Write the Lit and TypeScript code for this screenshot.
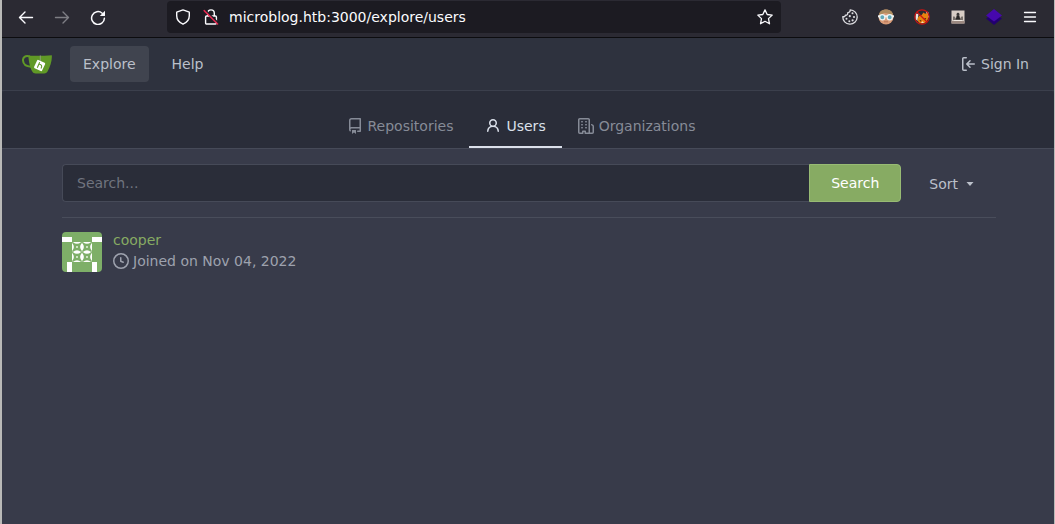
import { LitElement, html, css, svg } from "lit";
import { customElement, property } from "lit/decorators.js";

const octicon = (paths: string[]) => html`
  <svg class="icon" viewBox="0 0 16 16" width="16" height="16" fill="currentColor" aria-hidden="true">
    ${paths.map((d) => svg`<path fill-rule="evenodd" d=${d}></path>`)}
  </svg>`;

const icons = {
  repo: ["M2 2.5A2.5 2.5 0 0 1 4.5 0h8.75a.75.75 0 0 1 .75.75v12.5a.75.75 0 0 1-.75.75h-2.5a.75.75 0 1 1 0-1.5h1.75v-2h-8a1 1 0 0 0-.714 1.7.75.75 0 0 1-1.072 1.05A2.495 2.495 0 0 1 2 11.5v-9zm10.5-1V9h-8c-.356 0-.694.074-1 .208V2.5a1 1 0 0 1 1-1h8zM5 12.25v3.25a.25.25 0 0 0 .4.2l1.45-1.087a.25.25 0 0 1 .3 0L8.6 15.7a.25.25 0 0 0 .4-.2v-3.25a.25.25 0 0 0-.25-.25h-3.5a.25.25 0 0 0-.25.25z"],
  person: ["M10.5 5a2.5 2.5 0 1 1-5 0 2.5 2.5 0 0 1 5 0zm.061 3.073a4 4 0 1 0-5.123 0 6.004 6.004 0 0 0-3.431 5.142.75.75 0 0 0 1.498.07 4.5 4.5 0 0 1 8.99 0 .75.75 0 1 0 1.498-.07 6.005 6.005 0 0 0-3.432-5.142z"],
  organization: ["M1.5 14.25c0 .138.112.25.25.25H4v-1.25a.75.75 0 0 1 .75-.75h2.5a.75.75 0 0 1 .75.75v1.25h2.25a.25.25 0 0 0 .25-.25V1.75a.25.25 0 0 0-.25-.25h-8.5a.25.25 0 0 0-.25.25v12.5zM1.75 16A1.75 1.75 0 0 1 0 14.25V1.75C0 .784.784 0 1.75 0h8.5C11.216 0 12 .784 12 1.75v12.5c0 .085-.006.168-.018.25h2.268a.25.25 0 0 0 .25-.25V8.285a.25.25 0 0 0-.111-.208l-1.055-.703a.75.75 0 1 1 .832-1.248l1.055.703c.487.325.779.871.779 1.456v5.965A1.75 1.75 0 0 1 14.25 16h-3.5a.75.75 0 0 1-.197-.026c-.099.017-.2.026-.303.026h-3a.75.75 0 0 1-.75-.75V14h-1v1.25a.75.75 0 0 1-.75.75h-3zM3 3.75A.75.75 0 0 1 3.75 3h.5a.75.75 0 0 1 0 1.5h-.5A.75.75 0 0 1 3 3.75zM3.75 6a.75.75 0 0 0 0 1.5h.5a.75.75 0 0 0 0-1.5h-.5zM3 9.75A.75.75 0 0 1 3.75 9h.5a.75.75 0 0 1 0 1.5h-.5A.75.75 0 0 1 3 9.75zM7.75 9a.75.75 0 0 0 0 1.5h.5a.75.75 0 0 0 0-1.5h-.5zM7 6.75A.75.75 0 0 1 7.75 6h.5a.75.75 0 0 1 0 1.5h-.5A.75.75 0 0 1 7 6.75zM7.75 3a.75.75 0 0 0 0 1.5h.5a.75.75 0 0 0 0-1.5h-.5z"],
  signIn: ["M2 2.75C2 1.784 2.784 1 3.75 1h2.5a.75.75 0 0 1 0 1.5h-2.5a.25.25 0 0 0-.25.25v10.5c0 .138.112.25.25.25h2.5a.75.75 0 0 1 0 1.5h-2.5A1.75 1.75 0 0 1 2 13.25V2.75zm6.56 4.5h5.69a.75.75 0 0 1 0 1.5H8.56l1.97 1.97a.75.75 0 1 1-1.06 1.06L6.22 8.53a.75.75 0 0 1 0-1.06l3.25-3.25a.75.75 0 1 1 1.06 1.06L8.56 7.25z"],
  clock: ["M1.5 8a6.5 6.5 0 1 1 13 0 6.5 6.5 0 0 1-13 0zM8 0a8 8 0 1 0 0 16A8 8 0 0 0 8 0zm.5 4.75a.75.75 0 0 0-1.5 0v3.5a.75.75 0 0 0 .471.696l2.5 1a.75.75 0 0 0 .557-1.392L8.5 7.742V4.75z"],
};

@customElement("browser-toolbar")
export class BrowserToolbar extends LitElement {
  @property() url = "";

  static styles = css`
    :host {
      display: flex;
      align-items: center;
      padding: 1px 16px 4px;
      background: #2b2a33;
      border-bottom: 1px solid #0c0c0f;
      color: #fbfbfe;
    }
    .group { display: flex; align-items: center; gap: 20px; }
    button {
      display: flex;
      padding: 0;
      border: 0;
      background: none;
      color: inherit;
    }
    button:disabled { opacity: 0.4; }
    .address {
      flex: 1;
      display: flex;
      align-items: center;
      gap: 12px;
      height: 32px;
      margin: 0 61px;
      padding: 0 8px;
      border-radius: 4px;
      background: #1c1b22;
    }
    .address input {
      flex: 1;
      min-width: 0;
      padding: 0;
      margin-left: -2px;
      border: 0;
      outline: 0;
      background: none;
      color: inherit;
      font: 14px/20px "DejaVu Sans", sans-serif;
    }
  `;

  render() {
    return html`
      <div class="group">
        <button aria-label="Back">
          <svg width="16" height="16" viewBox="0 0 16 16" fill="none" stroke="currentColor" stroke-width="1.4" stroke-linecap="round" stroke-linejoin="round"><path d="M14.5 8.500H1.500M7 3 1.500 8.500 7 14"/></svg>
        </button>
        <button aria-label="Forward" disabled>
          <svg width="16" height="16" viewBox="0 0 16 16" fill="none" stroke="currentColor" stroke-width="1.4" stroke-linecap="round" stroke-linejoin="round"><path d="M1.500 8.500h13M9 3l5.500 5.500L9 14"/></svg>
        </button>
        <button aria-label="Reload">
          <svg width="16" height="16" viewBox="0 0 16 16"><path d="M14.4 9.200A6.400 6.400 0 1 1 12.200 4.200" fill="none" stroke="currentColor" stroke-width="1.5" stroke-linecap="round"/><path d="M15 1.800v4.600a.6.6 0 0 1-.6.6H9.800z" fill="currentColor"/></svg>
        </button>
      </div>
      <div class="address">
        <svg width="16" height="16" viewBox="0 0 16 16" fill="none" stroke="currentColor" stroke-width="1.4" stroke-linejoin="round"><path d="M8 .9 14.3 3.200v3.600c0 4-2.500 6.800-6.300 8.400C4.200 13.600 1.700 10.800 1.700 6.800V3.200z"/></svg>
        <svg width="16" height="16" viewBox="0 0 16 16" fill="none"><path d="M4.700 7V4.200a3.300 3.300 0 0 1 6.600 0V7M3.600 7h8.800a1 1 0 0 1 1 1v6a1 1 0 0 1-1 1H3.600a1 1 0 0 1-1-1V8a1 1 0 0 1 1-1z" stroke="#fbfbfe" stroke-width="1.400"/><path d="M2.400 1 15.800 14.400" stroke="#1c1b22" stroke-width="1.400"/><path d="M1.200 1.600 14.600 15" stroke="#e22850" stroke-width="1.500" stroke-linecap="round"/></svg>
        <input type="text" aria-label="Address" .value=${this.url} />
        <button aria-label="Bookmark this page">
          <svg width="16" height="16" viewBox="0 0 16 16" fill="none" stroke="currentColor" stroke-width="1.3" stroke-linejoin="round"><path d="m8 .9 2.200 4.600 5 .6-3.700 3.500 1 5.200L8 12.300l-4.500 2.500 1-5.200L.8 6.100l5-.6z"/></svg>
        </button>
      </div>
      <div class="group">
        <button aria-label="Cookie editor">
          <svg width="16" height="16" viewBox="0 0 16 16"><path d="M8.200.8A7.200 7.200 0 1 1 .8 7.600C1.800 8 3.200 7.600 3.400 6.200 5 6.400 6 5.200 5.600 3.800 7.200 3.600 8.400 2.400 8.200.8z" fill="none" stroke="#dcdce0" stroke-width="1.300" stroke-linejoin="round"/><g fill="#dcdce0"><circle cx="10.500" cy="4.200" r="1"/><circle cx="7.800" cy="7.200" r="1.100"/><circle cx="12" cy="8" r="1.100"/><circle cx="4.500" cy="9.800" r="1"/><circle cx="7.300" cy="12.200" r="1"/><circle cx="10.600" cy="11.300" r="1.100"/></g></svg>
        </button>
        <button aria-label="User agent switcher">
          <svg width="16" height="16" viewBox="0 0 16 16"><circle cx="8" cy="8" r="7.500" fill="#d99c78"/><path d="M.8 6.500C1 2.500 4 .5 8 .5s7 2 7.200 6C12 5 10 4 6 4 4 5 3 6 .8 6.500z" fill="#ad8c60"/><path d="M0 6.300h16v2H0z" fill="#eef0f0"/><circle cx="4.300" cy="8.200" r="2.600" fill="#62a9b8" stroke="#eef4f4" stroke-width="1.300"/><circle cx="11.700" cy="8.200" r="2.600" fill="#62a9b8" stroke="#eef4f4" stroke-width="1.300"/><path d="M6 12.800h4" stroke="#b87558"/></svg>
        </button>
        <button aria-label="Proxy disabled">
          <svg width="16" height="16" viewBox="0 0 16 16"><path d="M1.500 4.500 4.500 5l-1 7L1.500 10zM12 2l2.500 1.500L15 9l-2-2z" fill="#e8e4de"/><path d="M3.500 10.500C4 7 6 6 7.500 6.200L9.500 3.500l1.500 1.300L13.500 4c.8 2 .8 4.500.2 6.500-1 2.600-3.200 3.800-5.700 4-2.400 0-4-1.500-4.500-4z" fill="#e8830f"/><path d="m5.500 11 2 .5-1 1.300zM10.300 9l2 .3-1.200 1.400z" fill="#442818"/><path d="m7 14 1.500-1.800 1.500 1.500z" fill="#f4ead8"/><circle cx="8" cy="8" r="7.200" fill="none" stroke="#cc1212" stroke-width="1.200"/><path d="m3 3 10 10" stroke="#cc1212" stroke-width="1.200"/></svg>
        </button>
        <button aria-label="Extension">
          <svg width="16" height="16" viewBox="0 0 16 16"><path d="M1.500 1.500h13v13h-13z" fill="#d8cdc6"/><path d="M1.500 12h13v2.500h-13z" fill="#9c8981"/><path d="M3 7.500h1.500L6 9.500h4l1.500-2H13v3.500H3z" fill="#77706c"/><circle cx="8" cy="5.200" r="1.400" fill="#3c3939"/><path d="M6.700 6.200h2.600l.9 4.300H5.800z" fill="#282626"/><path d="M4 11.500h8" stroke="#eee6e0"/></svg>
        </button>
        <button aria-label="Wappalyzer">
          <svg width="16" height="16" viewBox="0 0 16 16"><path d="m0 9.500 8-5 8 5-8 6.500z" fill="#22006f"/><path d="m0 6.500 8-6.500 8 6.500-8 6z" fill="#4608ad"/></svg>
        </button>
        <button aria-label="Menu">
          <svg width="16" height="16" viewBox="0 0 16 16" stroke="currentColor" stroke-width="1.300" stroke-linecap="round"><path d="M2.500 3.500h11M2.500 8h11M2.500 12.500h11"/></svg>
        </button>
      </div>
    `;
  }
}

@customElement("site-header")
export class SiteHeader extends LitElement {
  static styles = css`
    :host {
      display: block;
      padding: 0 12px 0 20px;
      background: #2e323e;
      border-bottom: 1px solid #3b3f4c;
    }
    nav { display: flex; align-items: center; gap: 10px; height: 52px; }
    a {
      display: flex;
      align-items: center;
      gap: 5px;
      height: 36px;
      padding: 0 13px;
      border-radius: 4px;
      color: #bbc0ca;
      text-decoration: none;
    }
    .logo { padding: 0; margin-right: 8px; }
    .active { background: #40444f; }
    .end { margin-left: auto; }
    .icon { flex: none; }
  `;

  render() {
    return html`
      <nav aria-label="Main">
        <a class="logo" href="#" aria-label="Dashboard">
          <svg width="30" height="30" viewBox="0 0 30 30">
            <path d="M8 7.500C3 6 .8 8.500 1 11.500c.3 4 3.500 6 8 6.300" fill="none" stroke="#609926" stroke-width="2"/>
            <path d="M6.500 6.500c5 .5 15 .5 23.300-.3.500 5-1.600 11.300-4 15.800-.7 1.600-1.800 2.500-3.600 2.500h-8.600c-1.500 0-2.600-.7-3.600-2.500C8 18.500 6.300 10.500 6.500 6.500z" fill="#609926"/>
            <path d="M18.300 6.500v5.500" stroke="#8c9a7c" stroke-width="1"/>
            <rect x="13.200" y="12" width="8.800" height="9" rx="1" fill="#fff" transform="rotate(25 17.600 16.500)"/>
            <path d="M17.700 13.200 15.300 18.800m1.500-3.800c3 .8 3.600 1.800 2.200 4.600" fill="none" stroke="#609926" stroke-width="1.100"/>
          </svg>
        </a>
        <a class="active" href="#explore" aria-current="page">Explore</a>
        <a href="#help">Help</a>
        <a class="end" href="#login">${octicon(icons.signIn)}<span>Sign In</span></a>
      </nav>
    `;
  }
}

@customElement("explore-tabs")
export class ExploreTabs extends LitElement {
  @property() current = "Users";

  static styles = css`
    :host {
      display: block;
      background: #2a2d39;
      border-bottom: 1px solid #464a58;
      border-radius: 4px 4px 0 0;
    }
    nav {
      display: flex;
      justify-content: center;
      padding: 15px 14px 0 0;
    }
    a {
      display: flex;
      align-items: center;
      gap: 5px;
      height: 40px;
      padding: 0 16px;
      border-bottom: 2px solid transparent;
      color: #868b97;
      text-decoration: none;
    }
    .active { color: #dbe0ea; border-bottom-color: #dbe0ea; }
    .icon { flex: none; }
  `;

  private tabs = [
    { label: "Repositories", icon: icons.repo },
    { label: "Users", icon: icons.person },
    { label: "Organizations", icon: icons.organization },
  ];

  render() {
    return html`<nav aria-label="Explore">
      ${this.tabs.map(
        (t) => html`<a class=${t.label === this.current ? "active" : ""} href="#${t.label.toLowerCase()}">${octicon(t.icon)}<span>${t.label}</span></a>`
      )}
    </nav>`;
  }
}

@customElement("user-item")
export class UserItem extends LitElement {
  @property() name = "";
  @property() joined = "";

  static styles = css`
    :host { display: flex; gap: 11px; padding-top: 14px; }
    .avatar { flex: none; border-radius: 4px; }
    .name { display: block; height: 19px; line-height: 17px; color: #87ab63; text-decoration: none; }
    .meta { display: flex; align-items: center; gap: 4px; height: 20px; color: #9ea2ae; }
    .icon { flex: none; }
  `;

  // One quarter of the identicon's centre: a four-pointed star reaching for the corners.
  private cell(x: number, y: number) {
    return svg`<g transform="translate(${x} ${y})">
      <rect width="10" height="10" fill="#fff"></rect>
      <path d="M.4.4Q5 4.600 9.600.4 5.400 5 9.600 9.600 5 5.400.4 9.600 4.600 5 .4.4z" fill="#7eaf68" stroke="#7eaf68" stroke-width="1.200"></path>
      <circle cx="5" cy="5" r="1" fill="#e4f0de"></circle>
    </g>`;
  }

  render() {
    return html`
      <svg class="avatar" width="40" height="40" viewBox="0 0 40 40" role="img" aria-label=${this.name}>
        <rect width="40" height="40" fill="#7eaf68"></rect>
        <path d="M0 5h10v5H0zM30 5h10v5H30zM5 30h5v10H5zM30 30h5v10h-5z" fill="#fff"></path>
        ${this.cell(10, 10)}${this.cell(20, 10)}${this.cell(10, 20)}${this.cell(20, 20)}
      </svg>
      <div>
        <a class="name" href="#${this.name}">${this.name}</a>
        <div class="meta">${octicon(icons.clock)}<span>Joined on ${this.joined}</span></div>
      </div>
    `;
  }
}

@customElement("app-root")
export class AppRoot extends LitElement {
  static styles = css`
    :host {
      display: block;
      box-sizing: border-box;
      min-height: 100vh;
      border-left: 2px solid #b9b9b7;
      border-right: 1px solid #b9b9b7;
      background: #383b4a;
      color: #bbc0ca;
      font: 14px/20px "DejaVu Sans", sans-serif;
    }
    .header-backdrop { background: #2e323e; }
    main { padding: 15px 58px 0 60px; }
    .filters {
      display: flex;
      align-items: center;
      padding-bottom: 15px;
      border-bottom: 1px solid #494d5b;
    }
    form { flex: 1; display: flex; height: 38px; }
    input {
      flex: 1;
      min-width: 0;
      padding: 0 14px;
      border: 1px solid #464a58;
      border-right: 0;
      border-radius: 4px 0 0 4px;
      outline: 0;
      background: #2a2d39;
      color: #dbe0ea;
      font: inherit;
    }
    input::placeholder { color: #70747f; opacity: 1; }
    .submit {
      padding: 0 21px;
      border: 1px solid #98bb74;
      border-radius: 0 4px 4px 0;
      background: #87ab63;
      color: #fff;
      font: inherit;
    }
    .sort {
      display: flex;
      align-items: center;
      gap: 8px;
      margin-left: 28px;
      padding: 2px 22px 0 0;
      border: 0;
      background: none;
      color: inherit;
      font: inherit;
    }
  `;

  render() {
    return html`
      <browser-toolbar url="microblog.htb:3000/explore/users"></browser-toolbar>
      <site-header></site-header>
      <div class="header-backdrop"><explore-tabs current="Users"></explore-tabs></div>
      <main>
        <div class="filters">
          <form role="search" @submit=${(e: Event) => e.preventDefault()}>
            <input type="search" name="q" placeholder="Search..." aria-label="Search users" />
            <button class="submit">Search</button>
          </form>
          <button class="sort" aria-haspopup="menu">
            Sort
            <svg width="8" height="4" viewBox="0 0 8 4" aria-hidden="true"><path d="M.5 0h7L4 4z" fill="currentColor"/></svg>
          </button>
        </div>
        <user-item name="cooper" joined="Nov 04, 2022"></user-item>
      </main>
    `;
  }
}
